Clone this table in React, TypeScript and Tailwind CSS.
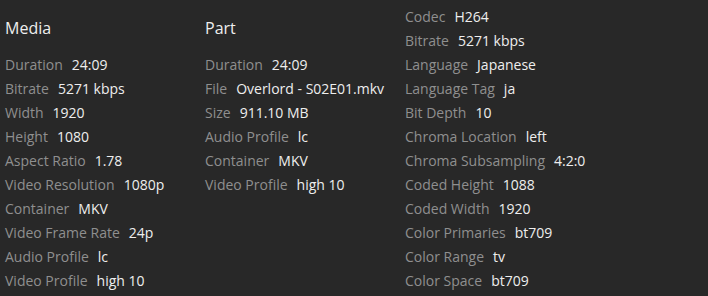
import React from "react";

type Row = [string, string];

const media: Row[] = [
  ["Duration", "24:09"],
  ["Bitrate", "5271 kbps"],
  ["Width", "1920"],
  ["Height", "1080"],
  ["Aspect Ratio", "1.78"],
  ["Video Resolution", "1080p"],
  ["Container", "MKV"],
  ["Video Frame Rate", "24p"],
  ["Audio Profile", "lc"],
  ["Video Profile", "high 10"],
];

const part: Row[] = [
  ["Duration", "24:09"],
  ["File", "Overlord - S02E01.mkv"],
  ["Size", "911.10 MB"],
  ["Audio Profile", "lc"],
  ["Container", "MKV"],
  ["Video Profile", "high 10"],
];

const stream: Row[] = [
  ["Codec", "H264"],
  ["Bitrate", "5271 kbps"],
  ["Language", "Japanese"],
  ["Language Tag", "ja"],
  ["Bit Depth", "10"],
  ["Chroma Location", "left"],
  ["Chroma Subsampling", "4:2:0"],
  ["Coded Height", "1088"],
  ["Coded Width", "1920"],
  ["Color Primaries", "bt709"],
  ["Color Range", "tv"],
  ["Color Space", "bt709"],
];

function Rows({ rows }: { rows: Row[] }) {
  return (
    <div className="flex flex-col">
      {rows.map(([k, v]) => (
        <div key={k} className="flex h-6 items-center gap-[9px] whitespace-nowrap text-[14px]">
          <span className="text-[#8f8f8f]">{k}</span>
          <span className="text-[#eeeeee]">{v}</span>
        </div>
      ))}
    </div>
  );
}

export default function App() {
  return (
    <div
      className="flex h-[296px] w-[708px] overflow-hidden bg-[#282828] pl-[5px]"
      style={{ fontFamily: '"Open Sans", sans-serif' }}
    >
      <div className="w-[200px] shrink-0 pt-4">
        <div className="h-6 text-[16px] leading-6 text-[#eeeeee]">Media</div>
        <div className="mt-3">
          <Rows rows={media} />
        </div>
      </div>
      <div className="w-[200px] shrink-0 pt-4">
        <div className="h-6 text-[16px] leading-6 text-[#eeeeee]">Part</div>
        <div className="mt-3">
          <Rows rows={part} />
        </div>
      </div>
      <div className="w-[200px] shrink-0 pt-1">
        <Rows rows={stream} />
      </div>
    </div>
  );
}
